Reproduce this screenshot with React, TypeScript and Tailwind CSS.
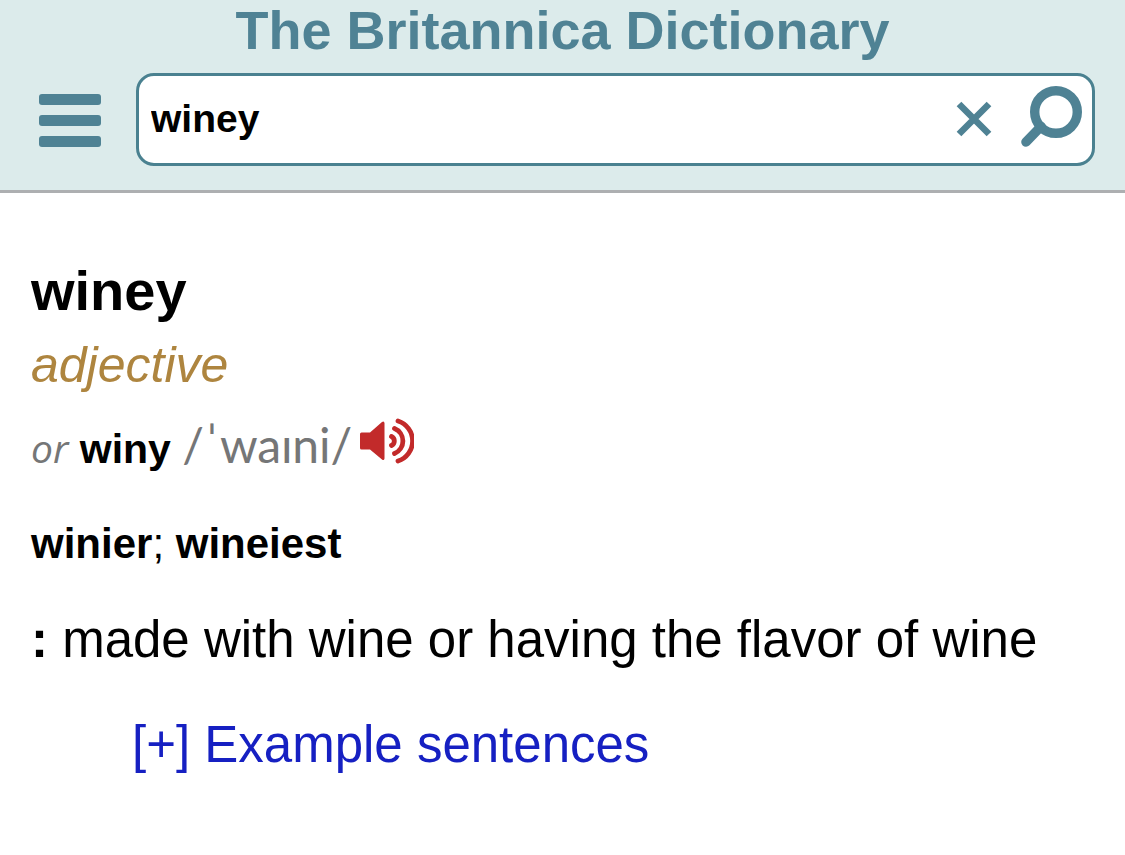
export default function App() {
  return (
    <div className="min-h-screen bg-white font-['Liberation_Sans',Arial,sans-serif] text-black">
      <header className="border-b-3 border-[#adafb1] bg-[#dcebeb] pb-6">
        <h1 className="text-center text-[54px] leading-[60px] font-bold text-[#4f8294]">
          The Britannica Dictionary
        </h1>
        <div className="mt-[13px] flex items-center gap-[35px] pr-[30px] pl-[39px]">
          <button type="button" aria-label="Menu" className="flex w-[62px] shrink-0 flex-col gap-[10px] pt-px">
            <span className="h-[11px] rounded-[3px] bg-[#4f8294]" />
            <span className="h-[11px] rounded-[3px] bg-[#4f8294]" />
            <span className="h-[11px] rounded-[3px] bg-[#4f8294]" />
          </button>
          <form
            role="search"
            onSubmit={(event) => event.preventDefault()}
            className="flex h-[93px] min-w-0 flex-1 items-center rounded-[18px] border-3 border-[#4a8190] bg-white pr-[9px] pb-px pl-3"
          >
            <input
              type="text"
              aria-label="Search the dictionary"
              defaultValue="winey"
              className="h-full min-w-0 flex-1 bg-transparent text-[39px] font-bold outline-none"
            />
            <button type="reset" aria-label="Clear" className="mr-7 shrink-0">
              <svg width="36" height="36" viewBox="0 0 36 36" fill="none" stroke="#4f8294" strokeWidth="6.6">
                <path d="M3 3 33 33M33 3 3 33" />
              </svg>
            </button>
            <button type="submit" aria-label="Search" className="mb-[6px] shrink-0">
              <svg width="63" height="63" viewBox="0 0 63 63" fill="none" stroke="#4f8294">
                <circle cx="36" cy="27" r="21.3" strokeWidth="9.4" />
                <path d="M21 41.5 6 57" strokeWidth="9.6" strokeLinecap="round" />
              </svg>
            </button>
          </form>
        </div>
      </header>

      <main className="px-[31px] pt-[66px]">
        <h2 className="text-[56px] leading-[64px] font-bold">winey</h2>
        <p className="mt-[13px] text-[50px] leading-[58px] text-[#ae853f] italic">adjective</p>
        <div className="mt-6 flex h-[58px] items-center text-[#757677]">
          <p className="text-[41px] leading-[58px] whitespace-pre">
            <span className="font-['Open_Sans',sans-serif] text-[39px] italic">or</span>{' '}
            <strong className="text-black">winy</strong>{' '}
            <span className="font-['Lato','Noto_Sans',sans-serif] text-[48px]">
              /<span className="px-[2px]">ˈ</span>waɪni/
            </span>
          </p>
          <button type="button" aria-label="Play pronunciation" className="mb-3 ml-2">
            <svg width="54" height="46" viewBox="0 0 54 46" fill="none" stroke="#c22a2a" strokeWidth="4.8" strokeLinecap="round">
              <path d="M1.5 14.5H10L22 4q2-1.5 2.5 1V40.5q-.5 2.5-2.5 1L10 31.5H1.5Q0 31.5 0 30V16Q0 14.5 1.5 14.5Z" fill="#c22a2a" stroke="none" />
              <path d="M31.5 18.5a5 5 0 0 1 0 9" />
              <path d="M34.500 10.500a13.500 13.500 0 0 1 0 25" />
              <path d="M38 3a21 21 0 0 1 0 40" />
            </svg>
          </button>
        </div>
        <p className="mt-11 text-[42px] leading-[48px]">
          <strong>winier</strong>; <strong>wineiest</strong>
        </p>
        <p className="mt-[43px] text-[51px] leading-[58px]">
          <strong>:</strong> made with wine or having the flavor of wine
        </p>
        <a href="#examples" className="mt-[47px] ml-[101px] inline-block text-[51px] leading-[58px] text-[#1620c2]">
          [+] Example sentences
        </a>
      </main>
    </div>
  );
}
